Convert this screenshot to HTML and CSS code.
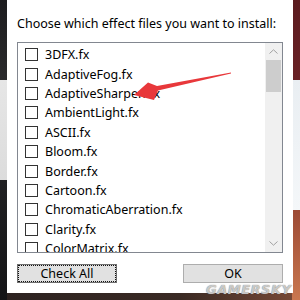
FILE: index.html
```html
<!DOCTYPE html>
<html lang="en">
<head>
  <meta charset="UTF-8" />
  <title>Install effects</title>
  <link rel="stylesheet" href="styles.css">
</head>
<body>

  <!-- Setup dialog -->
  <div class="dialog">
    <p class="prompt">Choose which effect files you want to install:</p>

    <div class="listbox">
      <ul class="items">
        <li><span class="box"></span>3DFX.fx</li>
        <li><span class="box"></span>AdaptiveFog.fx</li>
        <li><span class="box"></span>AdaptiveSharpen.fx</li>
        <li><span class="box"></span>AmbientLight.fx</li>
        <li><span class="box"></span>ASCII.fx</li>
        <li><span class="box"></span>Bloom.fx</li>
        <li><span class="box"></span>Border.fx</li>
        <li><span class="box"></span>Cartoon.fx</li>
        <li><span class="box"></span>ChromaticAberration.fx</li>
        <li><span class="box"></span>Clarity.fx</li>
        <li><span class="box"></span>ColorMatrix.fx</li>
      </ul>
      <div class="scrollbar">
        <div class="arrow up">
          <svg width="9" height="5" viewBox="0 0 9 5"><path d="M0.5 4.5 L4.5 0.8 L8.5 4.5" fill="none" stroke="#a0a0a0" stroke-width="1"/></svg>
        </div>
        <div class="thumb"></div>
        <div class="track"></div>
        <div class="arrow down">
          <svg width="9" height="5" viewBox="0 0 9 5"><path d="M0.5 0.5 L4.5 4.2 L8.5 0.5" fill="none" stroke="#a0a0a0" stroke-width="1"/></svg>
        </div>
      </div>
    </div>

    <div class="actions">
      <button class="btn focused">Check All</button>
      <button class="btn">OK</button>
    </div>
  </div>

  <!-- red annotation arrow drawn over the screenshot -->
  <svg class="pointer" width="300" height="300" viewBox="0 0 300 300">
    <path d="M231 72.5 L157 86 L148 82.5 L134 95 L154 100 L158 90.5 L231 73.5 Z" fill="#e8383b"/>
  </svg>

  <div class="watermark">GAMERSKY</div>

</body>
</html>
```

FILE: styles.css
```css
body {
  margin: 0;
  width: 300px;
  height: 300px;
  overflow: hidden;
  font-family: "Noto Sans", Arial, sans-serif;
  font-size: 12px;
  color: #000;
  background:
    linear-gradient(to bottom, #5b1c1f 0, #6a2226 80px, #e9eef2 80px, #f4f7f9 210px, #9c4a35 210px, #c9774f 300px) right top / 8px 300px no-repeat,
    linear-gradient(to bottom, #1d1d1f 0, #2a2a2c 80px, #e6e6e6 80px, #dcdcdc 180px, #202022 180px, #141416 300px) left top / 7px 300px no-repeat,
    linear-gradient(to right, #2c2220, #3a2a24 60%, #7a4a36) left bottom / 300px 7px no-repeat,
    #222;
}
.dialog {
  box-sizing: border-box;
  width: 286px;
  height: 293px;
  margin-left: 7px;
  background: #fff;
  padding: 16px 10px 0 10px;
}
.prompt {
  margin: 0;
  height: 16px;
  line-height: 16px;
  font-size: 12.5px;
  white-space: nowrap;
}
.listbox {
  margin-top: 10px;
  height: 211px;
  border: 1px solid #828790;
  box-sizing: border-box;
  display: flex;
  overflow: hidden;
}
.items {
  flex: 1;
  list-style: none;
  margin: 0;
  padding: 2px 0 0 7px;
}
.items li {
  height: 19.4px;
  display: flex;
  align-items: center;
  gap: 7px;
  white-space: nowrap;
  font-size: 12.5px;
}
.box {
  width: 11px;
  height: 11px;
  border: 1px solid #333;
  background: #fff;
  flex: none;
}
.scrollbar {
  width: 17px;
  background: #f0f0f0;
  display: flex;
  flex-direction: column;
}
.arrow {
  height: 17px;
  display: flex;
  align-items: center;
  justify-content: center;
}
.thumb {
  height: 32px;
  margin: 0 1px;
  background: #cdcdcd;
}
.track {
  flex: 1;
}
.actions {
  display: flex;
  justify-content: space-between;
  margin-top: 11px;
}
.btn {
  width: 100px;
  height: 19px;
  padding: 0;
  font-family: inherit;
  font-size: 12.5px;
  line-height: 16px;
  color: #000;
  background: #e1e1e1;
  border: 1px solid #adadad;
}
.btn.focused {
  border-color: #6e6e6e;
  outline: 1px dotted #111;
  outline-offset: -2px;
}
.pointer {
  position: absolute;
  left: 0;
  top: 0;
}
.watermark {
  position: absolute;
  left: 206px;
  top: 282px;
  font-family: "DejaVu Sans", sans-serif;
  font-size: 13px;
  font-weight: bold;
  font-style: italic;
  letter-spacing: 0.5px;
  color: rgba(235, 235, 235, 0.75);
  text-shadow: 0 0 1px #555;
}
```
